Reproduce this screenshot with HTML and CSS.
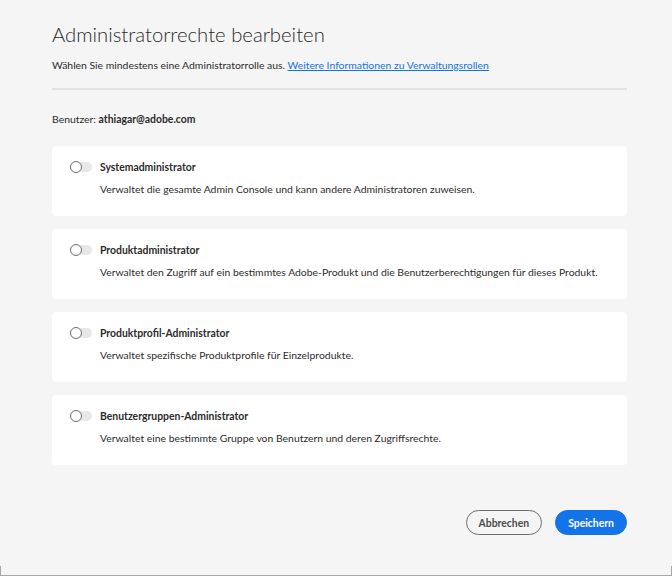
FILE: index.html
```html
<!DOCTYPE html>
<html lang="de">
<head>
<meta charset="utf-8">
<link rel="stylesheet" href="styles.css">
</head>
<body>
<div class="dialog">
  <h1 class="title">Administratorrechte bearbeiten</h1>
  <p class="subtitle">Wählen Sie mindestens eine Administratorrolle aus. <a href="#" class="link">Weitere Informationen zu Verwaltungsrollen</a></p>
  <hr class="divider">
  <p class="user">Benutzer: <strong>athiagar@adobe.com</strong></p>
  <div class="cards">
    <div class="card">
      <div class="row"><span class="switch"></span><span class="name">Systemadministrator</span></div>
      <p class="desc">Verwaltet die gesamte Admin Console und kann andere Administratoren zuweisen.</p>
    </div>
    <div class="card">
      <div class="row"><span class="switch"></span><span class="name">Produktadministrator</span></div>
      <p class="desc">Verwaltet den Zugriff auf ein bestimmtes Adobe-Produkt und die Benutzerberechtigungen für dieses Produkt.</p>
    </div>
    <div class="card">
      <div class="row"><span class="switch"></span><span class="name">Produktprofil-Administrator</span></div>
      <p class="desc">Verwaltet spezifische Produktprofile für Einzelprodukte.</p>
    </div>
    <div class="card">
      <div class="row"><span class="switch"></span><span class="name">Benutzergruppen-Administrator</span></div>
      <p class="desc">Verwaltet eine bestimmte Gruppe von Benutzern und deren Zugriffsrechte.</p>
    </div>
  </div>
  <div class="actions">
    <button class="btn btn-secondary">Abbrechen</button>
    <button class="btn btn-primary">Speichern</button>
  </div>
</div>
<div class="frame-edge"></div>
</body>
</html>
```
FILE: styles.css
```css
html, body {
  margin: 0;
  padding: 0;
  background: #f5f5f5;
  height: 576px;
  overflow: hidden;
}
body {
  font-family: Lato, "Noto Sans", sans-serif;
  color: #2c2c2c;
  display: flex;
  flex-direction: column;
}
.dialog {
  padding: 0 45px 0 52px;
  height: 566px;
  box-sizing: border-box;
}
.title {
  margin: 0;
  padding-top: 20px;
  font-size: 20.3px;
  font-weight: 300;
  line-height: 28px;
  color: #2c2c2c;
}
.subtitle {
  margin: 10px 0 0;
  font-size: 10.4px;
  line-height: 14px;
  color: #2c2c2c;
}
.link {
  color: #1473e6;
  text-decoration: underline;
}
.divider {
  margin: 16px 0 0;
  border: 0;
  height: 2px;
  background: #e1e1e1;
}
.user {
  margin: 22px 0 0;
  font-size: 10.4px;
  line-height: 14px;
}
.user strong { font-weight: 700; }
.cards {
  margin-top: 20px;
  display: flex;
  flex-direction: column;
  gap: 13px;
}
.card {
  background: #ffffff;
  border-radius: 4px;
  height: 70px;
  box-sizing: border-box;
  padding: 14px 18px 0;
}
.row {
  display: flex;
  align-items: center;
  gap: 8px;
  height: 14px;
}
.switch {
  position: relative;
  width: 22px;
  height: 10px;
  border-radius: 5px;
  background: #e8e8e8;
  display: inline-block;
}
.switch::before {
  content: "";
  position: absolute;
  left: 0;
  top: -1px;
  width: 10px;
  height: 10px;
  border-radius: 50%;
  background: #fff;
  border: 1px solid #6e6e6e;
}
.name {
  font-size: 10.4px;
  font-weight: 700;
}
.desc {
  margin: 8px 0 0 30px;
  font-size: 10.4px;
  line-height: 14px;
}
.actions {
  margin-top: 45px;
  display: flex;
  justify-content: flex-end;
  gap: 13px;
}
.btn {
  font-family: inherit;
  font-size: 10.4px;
  font-weight: 700;
  height: 25px;
  border-radius: 13px;
  padding: 0 12px;
  cursor: pointer;
}
.btn-secondary {
  background: transparent;
  border: 1.5px solid #6e6e6e;
  color: #4b4b4b;
}
.btn-primary {
  background: #1473e6;
  border: 1.5px solid #1473e6;
  color: #fff;
}
.frame-edge {
  height: 10px;
  border: 1px solid #a8a8a8;
  border-top: 0;
  box-sizing: border-box;
}
```
